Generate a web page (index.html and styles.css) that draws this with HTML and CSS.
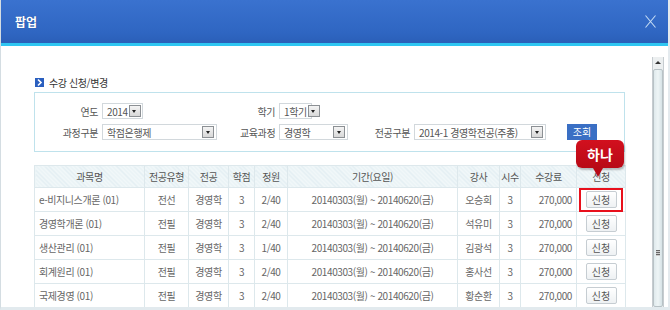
FILE: index.html
```html
<!DOCTYPE html>
<html lang="ko">
<head>
  <meta charset="UTF-8" />
  <title>팝업</title>
  <link rel="stylesheet" href="styles.css">
</head>
<body>
  <div class="popup">
    <div class="popup-head">
      <h1>팝업</h1>
      <span class="close">
        <svg width="11" height="13" viewBox="0 0 11 13"><path d="M0.5 0.5 L10.5 12.5 M10.5 0.5 L0.5 12.5" stroke="#c4dcf4" stroke-width="1.1" fill="none"/></svg>
      </span>
    </div>
    <div class="popup-body">
      <div class="content">
        <h2 class="sec-title">
          <span class="sec-icon"><svg width="9" height="9" viewBox="0 0 9 9"><path d="M3 1.5 L6 4.5 L3 7.5" stroke="#fff" stroke-width="1.6" fill="none"/></svg></span>
          수강 신청/변경
        </h2>

        <div class="search-box">
          <div class="search-grid">
            <label>연도</label>
            <div><span class="sel w-year">2014<i class="dd"></i></span></div>
            <label>학기</label>
            <div><span class="sel w-term">1학기<i class="dd"></i></span></div>
            <span></span><span></span><span></span>

            <label>과정구분</label>
            <div><span class="sel w-course">학점은행제<i class="dd"></i></span></div>
            <label>교육과정</label>
            <div><span class="sel w-edu">경영학<i class="dd"></i></span></div>
            <label>전공구분</label>
            <div><span class="sel w-major">2014-1 경영학전공(주종)<i class="dd"></i></span></div>
            <div class="btn-cell"><button type="button" class="btn-search">조회</button></div>
          </div>
        </div>

        <table class="course-table">
          <colgroup>
            <col style="width:110px"><col style="width:44px"><col style="width:40px"><col style="width:26px"><col style="width:33px">
            <col style="width:170px"><col style="width:42px"><col style="width:21px"><col style="width:56px"><col style="width:49px">
          </colgroup>
          <thead>
            <tr>
              <th>과목명</th><th>전공유형</th><th>전공</th><th>학점</th><th>정원</th>
              <th>기간(요일)</th><th>강사</th><th>시수</th><th>수강료</th><th>신청</th>
            </tr>
          </thead>
          <tbody>
            <tr>
              <td class="name">e-비지니스개론 (01)</td><td>전선</td><td>경영학</td><td>3</td><td>2/40</td>
              <td>20140303(월) ~ 20140620(금)</td><td>오승희</td><td>3</td><td class="fee">270,000</td>
              <td class="apply">
                <button type="button" class="btn-apply">신청</button>
                <span class="highlight"></span>
                <span class="tip">하나</span>
              </td>
            </tr>
            <tr>
              <td class="name">경영학개론 (01)</td><td>전필</td><td>경영학</td><td>3</td><td>2/40</td>
              <td>20140303(월) ~ 20140620(금)</td><td>석유미</td><td>3</td><td class="fee">270,000</td>
              <td class="apply"><button type="button" class="btn-apply">신청</button></td>
            </tr>
            <tr>
              <td class="name">생산관리 (01)</td><td>전필</td><td>경영학</td><td>3</td><td>1/40</td>
              <td>20140303(월) ~ 20140620(금)</td><td>김광석</td><td>3</td><td class="fee">270,000</td>
              <td class="apply"><button type="button" class="btn-apply">신청</button></td>
            </tr>
            <tr>
              <td class="name">회계원리 (01)</td><td>전필</td><td>경영학</td><td>3</td><td>2/40</td>
              <td>20140303(월) ~ 20140620(금)</td><td>홍사선</td><td>3</td><td class="fee">270,000</td>
              <td class="apply"><button type="button" class="btn-apply">신청</button></td>
            </tr>
            <tr>
              <td class="name">국제경영 (01)</td><td>전필</td><td>경영학</td><td>3</td><td>2/40</td>
              <td>20140303(월) ~ 20140620(금)</td><td>황순환</td><td>3</td><td class="fee">270,000</td>
              <td class="apply"><button type="button" class="btn-apply">신청</button></td>
            </tr>
          </tbody>
        </table>
      </div>

      <div class="scrollbar">
        <span class="arrow-up"></span>
        <div class="thumb"><span class="grip"></span></div>
      </div>
    </div>
  </div>
</body>
</html>
```

FILE: styles.css
```css
* {
  box-sizing: border-box;
}
body {
  margin: 0;
  font-family: "Noto Sans CJK KR", "Noto Sans", sans-serif;
  font-size: 10px;
  letter-spacing: -0.4px;
  color: #666;
  background: #fff;
}
.popup {
  width: 670px;
  height: 310px;
  overflow: hidden;
  border-left: 1px solid #d4dde2;
  border-right: 2px solid #e4eaee;
  border-bottom: 3px solid #e2eaee;
  display: flex;
  flex-direction: column;
}
.popup-head {
  height: 46px;
  flex: none;
  background: linear-gradient(#3a72cf, #2f66c2 75%, #2a5fb8);
  border-bottom: 3px solid #2ec6f2;
  display: flex;
  align-items: center;
  justify-content: space-between;
  padding: 0 12px 0 14px;
}
.popup-head h1 {
  margin: 0;
  font-size: 12px;
  font-weight: bold;
  letter-spacing: 0;
  color: #fff;
  text-shadow: 0 0 1px rgba(0,0,0,0.3);
}
.close {
  display: flex;
}
.popup-body {
  flex: 1;
  display: flex;
  min-height: 0;
}
.content {
  flex: 1;
  padding: 29px 27px 0 33px;
  min-width: 0;
}
.sec-title {
  margin: 0 0 3px;
  height: 14px;
  display: flex;
  align-items: center;
  gap: 5px;
  font-size: 10px;
  font-weight: normal;
  color: #333;
}
.sec-icon {
  width: 9px;
  height: 9px;
  background: #2a5fbf;
  display: flex;
  margin-left: 1px;
}
.search-box {
  border: 1px solid #bfe2ec;
  height: 60px;
  padding: 10px 0 0;
}
.search-grid {
  display: grid;
  grid-template-columns: 67px 138px 39px 95px 40px 132px auto;
  grid-auto-rows: 16px;
  row-gap: 5px;
  align-items: center;
}
.search-grid label {
  text-align: right;
  padding-right: 4px;
  color: #555;
  white-space: nowrap;
}
.sel {
  display: flex;
  align-items: center;
  justify-content: space-between;
  height: 16px;
  border: 1px solid #d2d8dc;
  background: #fff;
  padding: 0 2px 0 4px;
  color: #555;
  white-space: nowrap;
}
.w-year { width: 41px; }
.w-term { width: 33px; }
.w-course { width: 115px; }
.w-edu { width: 69px; }
.w-major { width: 132px; }
.dd {
  flex: none;
  width: 12px;
  height: 12px;
  border: 1px solid #8c9094;
  background: linear-gradient(#f4f4f4, #d8d8d8);
  position: relative;
  margin-left: 1px;
}
.dd::after {
  content: "";
  position: absolute;
  left: 2.5px;
  top: 4px;
  border-left: 2.5px solid transparent;
  border-right: 2.5px solid transparent;
  border-top: 3px solid #222;
}
.btn-cell {
  padding-left: 21px;
}
.btn-search {
  width: 30px;
  height: 16px;
  padding: 0;
  border: none;
  background: #3a6fc4;
  color: #fff;
  font-family: inherit;
  font-size: 10px;
  line-height: 16px;
}
.course-table {
  margin-top: 13px;
  width: 591px;
  border-collapse: collapse;
  table-layout: fixed;
}
.course-table th,
.course-table td {
  border: 1px solid #dde8ec;
  padding: 0;
  text-align: center;
  white-space: nowrap;
  overflow: visible;
}
.course-table th {
  height: 22px;
  font-weight: normal;
  color: #555;
  background: repeating-linear-gradient(45deg, #e2eef2 0 1px, #f1f7f9 1px 3px);
}
.course-table td {
  height: 24px;
  color: #666;
}
.course-table td.name {
  text-align: left;
  padding-left: 4px;
}
.course-table td.fee {
  text-align: right;
  padding-right: 4px;
}
.course-table td.apply {
  position: relative;
}
.btn-apply {
  width: 31px;
  height: 17px;
  padding: 0;
  border: 1px solid #c6cdd2;
  border-radius: 2px;
  background: linear-gradient(#fff, #eef1f3);
  color: #555;
  font-family: inherit;
  font-size: 10px;
  line-height: 15px;
  vertical-align: middle;
}
.highlight {
  position: absolute;
  left: 2px;
  top: 0;
  width: 44px;
  height: 24px;
  border: 2px solid #e8101c;
}
.tip {
  position: absolute;
  left: -1px;
  top: -48px;
  width: 48px;
  height: 28px;
  border-radius: 6px;
  background: linear-gradient(#d2101e, #b80a16);
  color: #fff;
  font-size: 14px;
  font-weight: bold;
  letter-spacing: 0;
  line-height: 28px;
  text-align: center;
  box-shadow: 1px 2px 2px rgba(0,0,0,0.25);
}
.tip::after {
  content: "";
  position: absolute;
  left: 17px;
  bottom: -9px;
  border-left: 5px solid transparent;
  border-right: 5px solid transparent;
  border-top: 9px solid #b80a16;
}
.scrollbar {
  flex: none;
  width: 12px;
  margin: 11px 4px 0 0;
  background: #eceff0;
  border-left: 1px solid #c6ccd0;
  border-right: 1px solid #c6ccd0;
  display: flex;
  flex-direction: column;
  align-items: center;
}
.arrow-up {
  margin-top: 4px;
  border-left: 3px solid transparent;
  border-right: 3px solid transparent;
  border-bottom: 3px solid #333;
}
.thumb {
  margin-top: 5px;
  flex: 1;
  width: 10px;
  border: 1px solid #b8c2c6;
  border-radius: 2px;
  background: linear-gradient(90deg, #dfe9ec, #eef5f6 50%, #d6e2e6);
  position: relative;
}
.grip {
  position: absolute;
  left: 2px;
  top: 180px;
  width: 4px;
  height: 6px;
  background: repeating-linear-gradient(#666 0 1px, #ccc 1px 2px);
}
```
